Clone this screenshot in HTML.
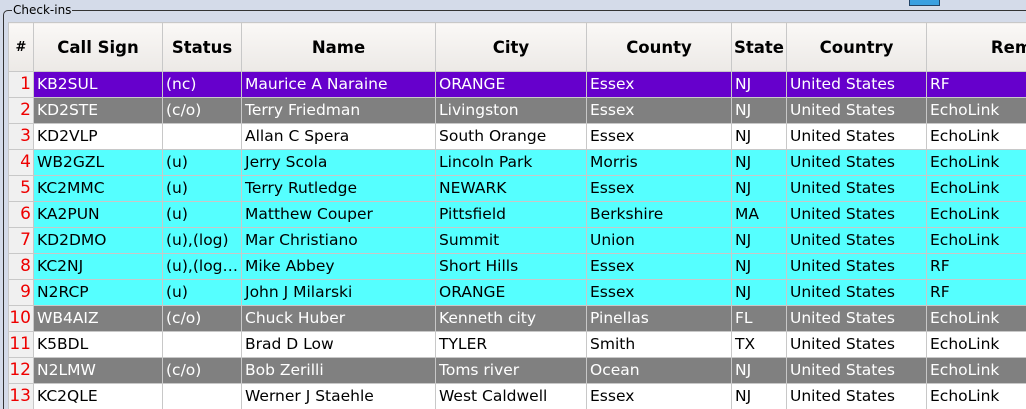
<!DOCTYPE html><html><head><style>
html,body{margin:0;width:1026px;height:409px;overflow:hidden}
body{background:#d4dbe9;font-family:"DejaVu Sans","Liberation Sans",sans-serif;position:relative}
.frame{position:absolute;left:3px;top:10px;width:1040px;height:420px;border:1px solid #333;border-radius:5px 0 0 0}
.lbl{position:absolute;left:12px;top:3px;font-size:12px;background:#d4dbe9;padding:0 1px;color:#000}
.btn{position:absolute;left:909px;top:-2px;width:29px;height:6px;background:#3aa0e0;border:1px solid #246}
table{position:absolute;left:8px;top:22px;width:1128px;border-collapse:collapse;table-layout:fixed;font-size:15.5px}
td,th{border:1px solid #c8c8c8;padding:0 0 0 3px;white-space:nowrap;overflow:hidden;height:25px;line-height:25px}
th{height:48px;background:linear-gradient(#faf8f6,#ece9e6);font-weight:bold;text-align:center;padding:0;font-size:16.5px}
td.n{background:#f0f0f0;color:#e00;text-align:right;padding:0 2px 0 0;font-size:17px}
tr.p td{background:#6600cc;color:#fff}
tr.g td{background:#808080;color:#fff}
tr.c td{background:#55ffff;color:#000}
tr.w td{background:#fff;color:#000}
tr td.n{background:#f0f0f0!important;color:#e00!important}
</style></head><body>
<div class="btn"></div>
<div class="frame"></div>
<div class="lbl">Check-ins</div>
<table>
<colgroup><col style="width:25px"><col style="width:129px"><col style="width:79px"><col style="width:194px"><col style="width:151px"><col style="width:145px"><col style="width:55px"><col style="width:140px"><col style="width:210px"></colgroup>
<tr><th style="font-size:13px">#</th><th>Call Sign</th><th>Status</th><th>Name</th><th>City</th><th>County</th><th>State</th><th>Country</th><th>Remarks</th></tr>
<tr class="p"><td class="n">1</td><td>KB2SUL</td><td>(nc)</td><td>Maurice A Naraine</td><td>ORANGE</td><td>Essex</td><td>NJ</td><td>United States</td><td>RF</td></tr>
<tr class="g"><td class="n">2</td><td>KD2STE</td><td>(c/o)</td><td>Terry Friedman</td><td>Livingston</td><td>Essex</td><td>NJ</td><td>United States</td><td>EchoLink</td></tr>
<tr class="w"><td class="n">3</td><td>KD2VLP</td><td></td><td>Allan C Spera</td><td>South Orange</td><td>Essex</td><td>NJ</td><td>United States</td><td>EchoLink</td></tr>
<tr class="c"><td class="n">4</td><td>WB2GZL</td><td>(u)</td><td>Jerry Scola</td><td>Lincoln Park</td><td>Morris</td><td>NJ</td><td>United States</td><td>EchoLink</td></tr>
<tr class="c"><td class="n">5</td><td>KC2MMC</td><td>(u)</td><td>Terry Rutledge</td><td>NEWARK</td><td>Essex</td><td>NJ</td><td>United States</td><td>EchoLink</td></tr>
<tr class="c"><td class="n">6</td><td>KA2PUN</td><td>(u)</td><td>Matthew Couper</td><td>Pittsfield</td><td>Berkshire</td><td>MA</td><td>United States</td><td>EchoLink</td></tr>
<tr class="c"><td class="n">7</td><td>KD2DMO</td><td>(u),(log)</td><td>Mar Christiano</td><td>Summit</td><td>Union</td><td>NJ</td><td>United States</td><td>EchoLink</td></tr>
<tr class="c"><td class="n">8</td><td>KC2NJ</td><td>(u),(log…</td><td>Mike Abbey</td><td>Short Hills</td><td>Essex</td><td>NJ</td><td>United States</td><td>RF</td></tr>
<tr class="c"><td class="n">9</td><td>N2RCP</td><td>(u)</td><td>John J Milarski</td><td>ORANGE</td><td>Essex</td><td>NJ</td><td>United States</td><td>RF</td></tr>
<tr class="g"><td class="n">10</td><td>WB4AIZ</td><td>(c/o)</td><td>Chuck Huber</td><td>Kenneth city</td><td>Pinellas</td><td>FL</td><td>United States</td><td>EchoLink</td></tr>
<tr class="w"><td class="n">11</td><td>K5BDL</td><td></td><td>Brad D Low</td><td>TYLER</td><td>Smith</td><td>TX</td><td>United States</td><td>EchoLink</td></tr>
<tr class="g"><td class="n">12</td><td>N2LMW</td><td>(c/o)</td><td>Bob Zerilli</td><td>Toms river</td><td>Ocean</td><td>NJ</td><td>United States</td><td>EchoLink</td></tr>
<tr class="w"><td class="n">13</td><td>KC2QLE</td><td></td><td>Werner J Staehle</td><td>West Caldwell</td><td>Essex</td><td>NJ</td><td>United States</td><td>EchoLink</td></tr>
</table>
</body></html>
